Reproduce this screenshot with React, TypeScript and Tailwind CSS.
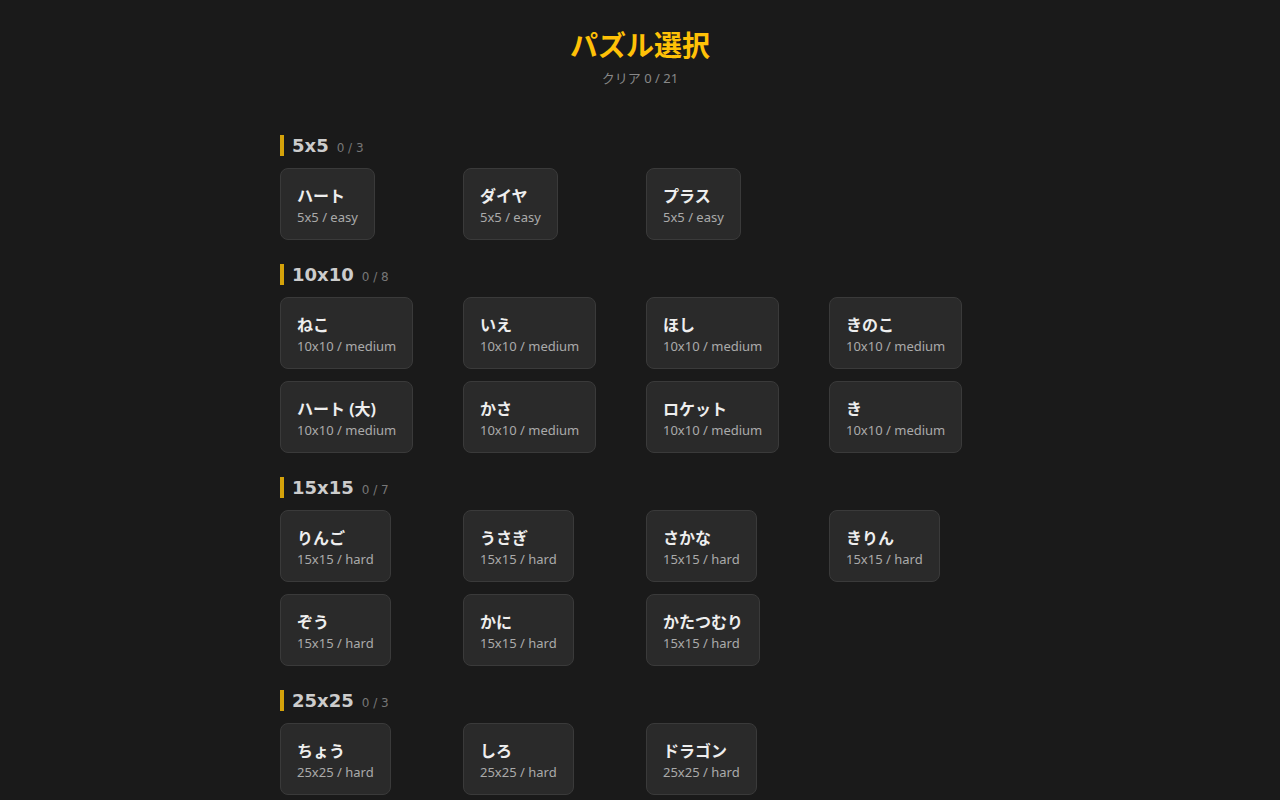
import React from 'react';

interface Puzzle {
  name: string;
  size: string;
  level: string;
}

interface Group {
  size: string;
  puzzles: Puzzle[];
}

const groups: Group[] = [
  {
    size: '5x5',
    puzzles: [
      { name: 'ハート', size: '5x5', level: 'easy' },
      { name: 'ダイヤ', size: '5x5', level: 'easy' },
      { name: 'プラス', size: '5x5', level: 'easy' },
    ],
  },
  {
    size: '10x10',
    puzzles: [
      { name: 'ねこ', size: '10x10', level: 'medium' },
      { name: 'いえ', size: '10x10', level: 'medium' },
      { name: 'ほし', size: '10x10', level: 'medium' },
      { name: 'きのこ', size: '10x10', level: 'medium' },
      { name: 'ハート (大)', size: '10x10', level: 'medium' },
      { name: 'かさ', size: '10x10', level: 'medium' },
      { name: 'ロケット', size: '10x10', level: 'medium' },
      { name: 'き', size: '10x10', level: 'medium' },
    ],
  },
  {
    size: '15x15',
    puzzles: [
      { name: 'りんご', size: '15x15', level: 'hard' },
      { name: 'うさぎ', size: '15x15', level: 'hard' },
      { name: 'さかな', size: '15x15', level: 'hard' },
      { name: 'きりん', size: '15x15', level: 'hard' },
      { name: 'ぞう', size: '15x15', level: 'hard' },
      { name: 'かに', size: '15x15', level: 'hard' },
      { name: 'かたつむり', size: '15x15', level: 'hard' },
    ],
  },
  {
    size: '25x25',
    puzzles: [
      { name: 'ちょう', size: '25x25', level: 'hard' },
      { name: 'しろ', size: '25x25', level: 'hard' },
      { name: 'ドラゴン', size: '25x25', level: 'hard' },
    ],
  },
];

function PuzzleCard({ puzzle }: { puzzle: Puzzle }) {
  return (
    <button className="justify-self-start text-left bg-[#2a2a2a] border border-[#3a3a3a] rounded-lg px-4 pt-4 pb-3 cursor-pointer">
      <div className="text-base font-bold leading-[22px] text-[#eeeeee]">{puzzle.name}</div>
      <div className="text-[13px] leading-[20px] text-[#aaaaaa]">
        {puzzle.size} / {puzzle.level}
      </div>
    </button>
  );
}

export default function App() {
  const total = groups.reduce((n, g) => n + g.puzzles.length, 0);

  return (
    <div
      className="min-h-screen bg-[#1a1a1a] text-white"
      style={{ fontFamily: '"Noto Sans", "Noto Sans CJK JP", sans-serif' }}
    >
      <div className="max-w-[720px] mx-auto pt-[28px] pb-10">
        <header className="text-center mb-[48px]">
          <h1 className="text-[28px] font-bold leading-[34px] text-[#ffc107]">パズル選択</h1>
          <p className="mt-[7px] text-[13px] leading-[18px] text-[#888888]">
            クリア 0 / {total}
          </p>
        </header>

        {groups.map((group) => (
          <section key={group.size} className="mb-6">
            <div
              className="flex items-baseline gap-2 border-l-4 border-[#d4a20a] pl-2 mb-3 h-[21px]"
              style={{ fontFamily: '"DejaVu Sans", sans-serif' }}
            >
              <span className="text-lg font-bold leading-[21px] text-[#cccccc]">{group.size}</span>
              <span className="text-xs leading-[21px] text-[#777777]">0 / {group.puzzles.length}</span>
            </div>
            <div className="grid grid-cols-4 gap-3">
              {group.puzzles.map((p) => (
                <PuzzleCard key={p.name} puzzle={p} />
              ))}
            </div>
          </section>
        ))}
      </div>
    </div>
  );
}
